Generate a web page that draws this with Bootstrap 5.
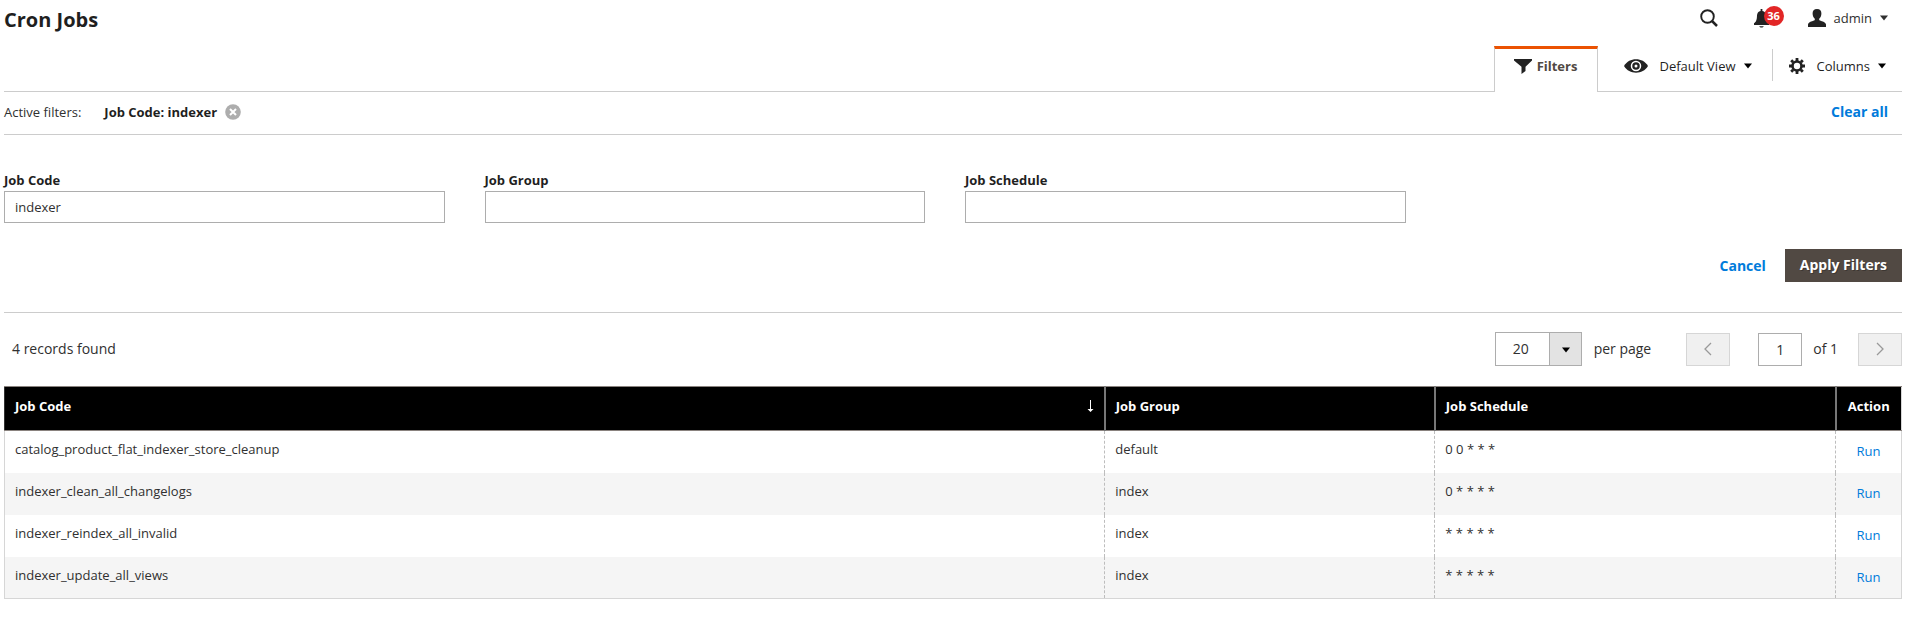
<!DOCTYPE html>
<html lang="en">
<head>
<meta charset="utf-8">
<meta name="viewport" content="width=device-width, initial-scale=1">
<title>Cron Jobs</title>
<link href="https://cdn.jsdelivr.net/npm/bootstrap@5.3.0/dist/css/bootstrap.min.css" rel="stylesheet">
<style>
body{font-family:"Open Sans","Noto Sans",sans-serif;font-size:13px;line-height:18px;color:#303030;background:#fff}
.page{padding:0 3px 0 4px}
a{color:#007bdb;text-decoration:none}
svg{display:block;flex:none}
.page-head{height:46px;padding:0 14px 0 0}
h1{font-size:20px;line-height:24px;font-weight:700;color:#1f1f1f;padding-top:8px}
.head-tools{height:36px}
.plain{border:0;background:none;padding:0;color:inherit;display:flex;align-items:center}
.bell{position:relative;width:24px;margin:0 30px 0 36px}
.count{position:absolute;left:10px;top:-3px;width:20px;height:20px;border-radius:50%;background:#e22626;color:#fff;font-size:11px;line-height:20px;font-weight:700;text-align:center}
.grid-tools{height:46px;border-bottom:1px solid #ccc}
.tool{height:39px;color:#1f1f1f}
.tab-filters{width:104px;height:46px;border:1px solid #ccc;border-width:3px 1px 0;border-top-color:#eb5202;background:#fff;justify-content:center;font-weight:700;color:#514943;padding-bottom:9px;gap:5px}
.view-tool{padding:0 20px 0 26px}
.view-tool span{margin:0 8px 0 12px}
.col-tool{padding:0 16px}
.divider{width:1px;height:32px;background:#ccc;margin-top:3px}
.active-row{height:43px;border-bottom:1px solid #ccc;padding:0 14px 2px 0}
.strong{font-weight:700;color:#1f1f1f;margin:0 8px 0 23px}
.clear{font-size:14px;font-weight:700}
.filter-fields{display:grid;grid-template-columns:repeat(4,1fr);gap:40px;padding:35px 16px 0 0}
.filter-fields label{display:block;font-weight:700;color:#1f1f1f;line-height:20px;margin-bottom:1px}
.box{border:1px solid #adadad;border-radius:0;background:#fff;color:#303030;font-size:13px;line-height:18px;padding:6px 10px;width:100%;height:32px}
.filter-foot{padding:26px 0 30px;border-bottom:1px solid #ccc}
.apply{background:#514943;color:#fff;border:0;border-radius:0;font-size:14px;font-weight:700;line-height:18px;padding:7px 15px 8px;text-shadow:1px 1px 0 rgba(0,0,0,.25)}
.cancel{font-size:14px;font-weight:700;color:#007bdb;margin-right:19px}
.pager{padding:19px 0 20px;font-size:14px}
.size-wrap{position:relative;width:87px}
.size-wrap select{appearance:none;width:100%;height:34px;border:1px solid #adadad;background:linear-gradient(to right,#fff 53px,#adadad 53px,#adadad 54px,#e3e3e3 54px);padding:0 0 0 17px;font-size:14px;color:#303030;border-radius:0}
.size-wrap svg{position:absolute;right:12px;top:15px;pointer-events:none}
.per-page{margin:0 35px 0 12px}
.of-pages{margin-right:20px}
.step{width:44px;height:33px;border:1px solid #d6d6d6;background:#f0f0f0;padding:0;display:flex;align-items:center;justify-content:center}
.pageno{width:44px;height:33px;font-size:14px;padding:0;text-align:center;margin:0 11px 0 28px}
.jobs{width:100%;table-layout:fixed;border-collapse:collapse;border:1px solid #d6d6d6;margin:0}
.jobs th{background:#000;color:#fff;font-weight:700;height:44px;padding:10px 10px 15px;border:1px solid #8a837f;border-width:1px 0 1px 2px;border-left-color:#777}
.jobs th:first-child{border-left:1px solid #333}
.jobs td{height:42px;padding:9px 10px;vertical-align:top;border:0;border-left:1px dashed #bdbdbd}
.jobs td:first-child{border-left:1px solid #d6d6d6}
.jobs tbody tr:nth-child(even){background:#f5f5f5}
.jobs .act{padding-left:0;padding-right:0;text-align:center}
.jobs td.act{padding-top:11px}
.c1{width:58%}.c2{width:17.4%}.c4{width:66px}
</style>
</head>
<body>
<svg width="0" height="0" class="position-absolute" aria-hidden="true">
  <symbol id="caret" viewBox="0 0 8 6"><path d="M0 .5h8L4 5.5z" fill="currentColor"/></symbol>
</svg>
<div class="page">
  <header class="page-head d-flex justify-content-between align-items-start">
    <h1 class="m-0">Cron Jobs</h1>
    <div class="head-tools d-flex align-items-center">
      <button class="plain" type="button" aria-label="Search">
        <svg width="18" height="18" viewBox="0 0 18 18" fill="none" stroke="#222" stroke-width="1.900"><circle cx="7.500" cy="7.500" r="6.300"/><path d="M12 12l5 5" stroke-width="2.500"/></svg>
      </button>
      <button class="plain bell" type="button" aria-label="Notifications">
        <svg width="15" height="19" viewBox="0 0 15 19" fill="#222"><path d="M6.600 0h1.800v1.900c2.400.5 3.500 2.200 3.600 4.600.1 4.500.9 6.500 3 7.700V16H0v-1.800c2.100-1.200 2.900-3.200 3-7.700.1-2.400 1.200-4.100 3.600-4.600zM5.200 17.200h4.600c-.4.900-1.200 1.400-2.300 1.400s-1.900-.5-2.300-1.400z"/></svg>
        <span class="count">36</span>
      </button>
      <button class="plain gap-2" type="button">
        <svg width="18" height="18" viewBox="0 0 18 18" fill="#222"><path d="M9 0c3 0 4.600 1.900 4.400 4.700-.1 2.300-.9 4-2.200 5v1.200c1.300 1.200 6.300 1.500 6.800 4.600V18H0v-2.500c.5-3.100 5.500-3.400 6.800-4.600V9.700c-1.300-1-2.100-2.700-2.200-5C4.400 1.900 6 0 9 0z"/></svg>
        <span>admin</span>
        <svg width="8" height="6"><use href="#caret"/></svg>
      </button>
    </div>
  </header>

  <div class="grid-tools d-flex justify-content-end align-items-start">
    <button class="plain tab-filters" type="button">
      <svg width="18" height="15" viewBox="0 0 18 15" fill="#222"><path d="M0 0h18v1.500l-6.500 6.200V12L7.500 15V7.700L0 1.500z"/></svg>Filters
    </button>
    <button class="plain tool view-tool" type="button">
      <svg width="24" height="14" viewBox="0 0 24 14"><path d="M0 7C3 2.300 7 .3 12 .3S21 2.300 24 7c-3 4.700-7 6.700-12 6.700S3 11.700 0 7z" fill="#222"/><circle cx="12" cy="7" r="4.500" fill="none" stroke="#fff" stroke-width="1.500"/><circle cx="12" cy="7" r="1.500" fill="#fff"/></svg>
      <span>Default View</span>
      <svg width="8" height="6" color="#000"><use href="#caret"/></svg>
    </button>
    <span class="divider"></span>
    <button class="plain tool col-tool" type="button">
      <svg width="16" height="16" viewBox="-8 -8 16 16"><circle r="4.500" fill="none" stroke="#222" stroke-width="2.600"/><path d="M0-8v3M0 5v3M-8 0h3M5 0h3M-5.800-5.800l2 2M3.800 3.800l2 2M-5.800 5.800l2-2M3.800-3.800l2-2" stroke="#222" stroke-width="2.800"/></svg>
      <span class="ms-2 me-2 ps-1">Columns</span>
      <svg width="8" height="6" color="#000"><use href="#caret"/></svg>
    </button>
  </div>

  <div class="active-row d-flex align-items-center">
    <span>Active filters:</span>
    <span class="strong">Job Code: indexer</span>
    <button class="plain" type="button" aria-label="Remove filter">
      <svg width="16" height="16" viewBox="0 0 16 16"><circle cx="8" cy="8" r="7.800" fill="#adadad"/><path d="M5 5l6 6M11 5l-6 6" stroke="#fff" stroke-width="2"/></svg>
    </button>
    <a href="#" class="clear ms-auto">Clear all</a>
  </div>

  <form onsubmit="return false">
    <div class="filter-fields">
      <div><label for="code">Job Code</label><input id="code" class="box" type="text" value="indexer"></div>
      <div><label for="group">Job Group</label><input id="group" class="box" type="text"></div>
      <div><label for="schedule">Job Schedule</label><input id="schedule" class="box" type="text"></div>
    </div>
    <div class="filter-foot d-flex justify-content-end align-items-center">
      <button class="plain cancel" type="button">Cancel</button>
      <button class="btn apply" type="submit">Apply Filters</button>
    </div>
  </form>

  <div class="pager d-flex align-items-center">
    <span class="ms-2 me-auto">4 records found</span>
    <span class="size-wrap"><select id="size"><option>20</option><option>30</option><option>50</option></select><svg width="8" height="6" color="#000"><use href="#caret"/></svg></span>
    <label for="size" class="per-page">per page</label>
    <button class="step" type="button" disabled aria-label="Previous page"><svg width="8" height="14" viewBox="0 0 8 14" fill="none" stroke="#999" stroke-width="1.300"><path d="M7 1L1 7l6 6"/></svg></button>
    <input id="pageno" class="box pageno" type="text" value="1" aria-label="Page number">
    <label for="pageno" class="of-pages">of 1</label>
    <button class="step" type="button" disabled aria-label="Next page"><svg width="8" height="14" viewBox="0 0 8 14" fill="none" stroke="#999" stroke-width="1.300"><path d="M1 1l6 6-6 6"/></svg></button>
  </div>

  <table class="jobs">
    <colgroup><col class="c1"><col class="c2"><col><col class="c4"></colgroup>
    <thead><tr>
      <th scope="col"><div class="d-flex justify-content-between align-items-center">Job Code<svg width="7" height="12" viewBox="0 0 7 12" fill="#fff"><path d="M3 0h1v9h2.500l-3 3-3-3H3z"/></svg></div></th>
      <th scope="col">Job Group</th><th scope="col">Job Schedule</th><th scope="col" class="act">Action</th>
    </tr></thead>
    <tbody>
      <tr><td>catalog_product_flat_indexer_store_cleanup</td><td>default</td><td>0 0 * * *</td><td class="act"><a href="#">Run</a></td></tr>
      <tr><td>indexer_clean_all_changelogs</td><td>index</td><td>0 * * * *</td><td class="act"><a href="#">Run</a></td></tr>
      <tr><td>indexer_reindex_all_invalid</td><td>index</td><td>* * * * *</td><td class="act"><a href="#">Run</a></td></tr>
      <tr><td>indexer_update_all_views</td><td>index</td><td>* * * * *</td><td class="act"><a href="#">Run</a></td></tr>
    </tbody>
  </table>
</div>
<script src="https://cdn.jsdelivr.net/npm/bootstrap@5.3.0/dist/js/bootstrap.bundle.min.js"></script>
</body>
</html>
